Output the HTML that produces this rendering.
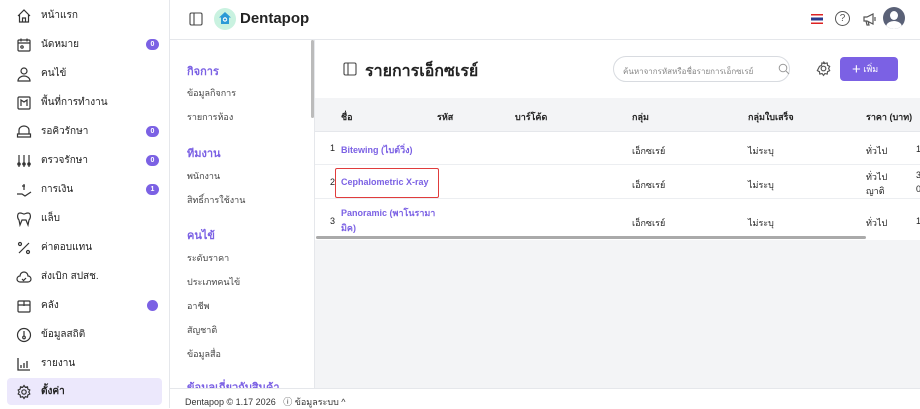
<!DOCTYPE html>
<html><head><meta charset="utf-8"><style>
*{box-sizing:border-box;margin:0;padding:0}
body{width:920px;height:408px;overflow:hidden;font-family:"Liberation Sans","Noto Sans CJK SC",sans-serif;background:#fff;color:#222;position:relative;font-size:10px}
.sb{position:absolute;left:0;top:0;width:170px;height:408px;border-right:1px solid #e5e7eb;background:#fff}
.it{position:absolute;left:7px;width:155px;height:27px;display:flex;align-items:center;font-size:10px;color:#222}
.it svg{position:absolute;left:9px;width:16px;height:16px}
.it span{position:absolute;left:34px}
.bd{position:absolute;left:139px;width:13px;height:11px;border-radius:6px;background:#7b61e4;color:#fff;font-size:7px;text-align:center;line-height:11px;font-weight:bold}
.act{background:#ece8fc;border-radius:4px;font-weight:bold}
.top{position:absolute;left:170px;top:0;right:0;height:40px;border-bottom:1px solid #e5e7eb;background:#fff}
.sub{position:absolute;left:170px;top:40px;width:145px;height:348px;background:#fff;border-right:1px solid #e5e7eb}
.sh{position:absolute;left:17px;color:#7b61e4;font-weight:bold;font-size:11px}
.si{position:absolute;left:17px;color:#444;font-size:9px}
.main{position:absolute;left:315px;top:40px;right:0;height:348px;background:#f3f4f6}
.card{position:absolute;left:0;top:0;right:0;height:200px;background:#fff}
.th{position:absolute;left:0;right:0;top:58px;height:34px;background:#f3f4f6;border-bottom:1px solid #e5e7eb}
.th div{position:absolute;top:12px;font-weight:bold;font-size:9px;color:#222}
.row{position:absolute;left:0;right:0;border-bottom:1px solid #eceef1;font-size:9px}
.row div{position:absolute}
.lk{color:#7b61e4;font-weight:bold}
.foot{position:absolute;left:170px;top:388px;right:0;height:20px;border-top:1px solid #e5e7eb;background:#fff;font-size:9px;color:#333;padding:6px 0 0 15px}
</style></head><body>
<div class="sb">
<div class="it" style="top:2px"><svg viewBox="0 0 16 16" fill="none" stroke="#333" stroke-width="1.2"><path d="M2 8L8 2l6 6M3.5 7v7h9V7M6.5 14v-4h3v4"/></svg><span>หน้าแรก</span></div>
<div class="it" style="top:31px"><svg viewBox="0 0 16 16" fill="none" stroke="#333" stroke-width="1.2"><rect x="2" y="3" width="12" height="11" rx="1"/><path d="M2 6h12M5 1.5v3M11 1.5v3"/><circle cx="6" cy="10" r="1.2"/></svg><span>นัดหมาย</span><div class="bd">0</div></div>
<div class="it" style="top:60px"><svg viewBox="0 0 16 16" fill="none" stroke="#333" stroke-width="1.2"><circle cx="8" cy="5" r="3"/><path d="M2 15c0-3 3-5 6-5s6 2 6 5z"/></svg><span>คนไข้</span></div>
<div class="it" style="top:89px"><svg viewBox="0 0 16 16" fill="none" stroke="#333" stroke-width="1.2"><rect x="2" y="2" width="12" height="12" rx="1"/><path d="M5 11V5l3 2 3-2v6"/></svg><span>พื้นที่การทำงาน</span></div>
<div class="it" style="top:118px"><svg viewBox="0 0 16 16" fill="none" stroke="#333" stroke-width="1.2"><path d="M3 10V6a5 4 0 0110 0v4M1.5 10h13v3h-13z"/></svg><span>รอคิวรักษา</span><div class="bd">0</div></div>
<div class="it" style="top:147px"><svg viewBox="0 0 16 16" fill="none" stroke="#333" stroke-width="1.2"><path d="M3 2v12M8 2v12M13 2v12"/><circle cx="3" cy="11" r="1.2"/><circle cx="8" cy="11" r="1.2"/><circle cx="13" cy="11" r="1.2"/></svg><span>ตรวจรักษา</span><div class="bd">0</div></div>
<div class="it" style="top:176px"><svg viewBox="0 0 16 16" fill="none" stroke="#333" stroke-width="1.2"><path d="M1 12h5l3 2 6-4M8 2v6M6 4h3"/></svg><span>การเงิน</span><div class="bd">1</div></div>
<div class="it" style="top:205px"><svg viewBox="0 0 16 16" fill="none" stroke="#333" stroke-width="1.2"><path d="M4 2c-3 0-3 5-1 7l1 5 2-5h4l2 5 1-5c2-2 2-7-1-7-2 0-3 1-4 1S6 2 4 2z"/></svg><span>แล็บ</span></div>
<div class="it" style="top:234px"><svg viewBox="0 0 16 16" fill="none" stroke="#333" stroke-width="1.2"><path d="M13 3L3 13"/><circle cx="4" cy="4" r="1.5"/><circle cx="12" cy="12" r="1.5"/></svg><span>ค่าตอบแทน</span></div>
<div class="it" style="top:263px"><svg viewBox="0 0 16 16" fill="none" stroke="#333" stroke-width="1.2"><path d="M4 13a3 3 0 010-6 4 4 0 018 0 3 3 0 010 6z M6 10l1.5 1.5L10 9"/></svg><span>ส่งเบิก สปสช.</span></div>
<div class="it" style="top:292px"><svg viewBox="0 0 16 16" fill="none" stroke="#333" stroke-width="1.2"><rect x="2" y="3" width="12" height="11" rx="1"/><path d="M2 7h12M8 3v5"/></svg><span>คลัง</span><div class="bd" style="width:11px;left:140px"></div></div>
<div class="it" style="top:321px"><svg viewBox="0 0 16 16" fill="none" stroke="#333" stroke-width="1.2"><circle cx="8" cy="8" r="6.5"/><path d="M8 4v5"/><circle cx="8" cy="10.5" r="1.3"/></svg><span>ข้อมูลสถิติ</span></div>
<div class="it" style="top:350px"><svg viewBox="0 0 16 16" fill="none" stroke="#333" stroke-width="1.3"><path d="M2 2v12h12M5 12V9M8 12V7M11 12V5"/></svg><span>รายงาน</span></div>
<div class="it act" style="top:378px"><svg viewBox="0 0 16 16" fill="none" stroke="#333" stroke-width="1.2"><circle cx="8" cy="8" r="2.2"/><path d="M8 1.5l1.3 1.8 2.2-.5.3 2.2 2 1-1 2 1 2-2 1-.3 2.2-2.2-.5L8 14.5l-1.3-1.8-2.2.5-.3-2.2-2-1 1-2-1-2 2-1 .3-2.2 2.2.5z"/></svg><span>ตั้งค่า</span></div>
</div>
<div class="top">
<svg style="position:absolute;left:19px;top:12px" width="14" height="14" viewBox="0 0 14 14" fill="none" stroke="#444" stroke-width="1.1"><rect x="1" y="1" width="12" height="12" rx="1.5"/><path d="M5 1v12"/></svg>
<div style="position:absolute;left:44px;top:8px;width:22px;height:22px;border-radius:50%;background:#c9f2e0"></div>
<svg style="position:absolute;left:48px;top:11px" width="14" height="14" viewBox="0 0 14 14"><path d="M7 1L1 6.5h2V13h8V6.5h2z" fill="#2a9ad6"/><circle cx="7" cy="8.5" r="2.2" fill="#fff"/><path d="M7 7.3v2.4M5.8 8.5h2.4" stroke="#2a9ad6" stroke-width="0.9"/></svg>
<div style="position:absolute;left:70px;top:10px;font-size:15px;font-weight:bold;color:#222">Dentapop</div>
<div style="position:absolute;left:641px;top:14px;width:12px;height:10px;background:linear-gradient(#d22 0 17%,#fff 17% 33%,#2a3a8c 33% 67%,#fff 67% 83%,#d22 83%)"></div>
<div style="position:absolute;left:665px;top:11px;width:15px;height:15px;border:1.2px solid #555;border-radius:50%;font-size:10px;text-align:center;line-height:13px;color:#555">?</div>
<svg style="position:absolute;left:692px;top:11px" width="16" height="16" viewBox="0 0 16 16" fill="none" stroke="#555" stroke-width="1.2"><path d="M2 6h3l6-3v10l-6-3H2zM4 10l1 4h2l-1-4M13 6v4"/></svg>
<div style="position:absolute;left:713px;top:7px;width:22px;height:22px;border-radius:50%;background:#5a6177;overflow:hidden"><div style="position:absolute;left:7px;top:4px;width:8px;height:9px;border-radius:50%;background:#fff"></div><div style="position:absolute;left:3px;top:14px;width:16px;height:12px;border-radius:50%;background:#fff"></div></div>
</div>
<div class="sub">
<div style="position:absolute;left:141px;top:0;width:3px;height:78px;background:#bbb;border-radius:2px"></div>
<div class="sh" style="top:22px">กิจการ</div>
<div class="si" style="top:46px">ข้อมูลกิจการ</div>
<div class="si" style="top:70px">รายการห้อง</div>
<div class="sh" style="top:104px">ทีมงาน</div>
<div class="si" style="top:129px">พนักงาน</div>
<div class="si" style="top:153px">สิทธิ์การใช้งาน</div>
<div class="sh" style="top:186px">คนไข้</div>
<div class="si" style="top:211px">ระดับราคา</div>
<div class="si" style="top:235px">ประเภทคนไข้</div>
<div class="si" style="top:259px">อาชีพ</div>
<div class="si" style="top:283px">สัญชาติ</div>
<div class="si" style="top:307px">ข้อมูลสื่อ</div>
<div class="sh" style="top:338px">ข้อมูลเกี่ยวกับสินค้า</div>
</div>
<div class="main">
<div class="card">
<svg style="position:absolute;left:28px;top:22px" width="14" height="14" viewBox="0 0 14 14" fill="none" stroke="#444" stroke-width="1.1"><rect x="1" y="1" width="12" height="12" rx="1.5"/><path d="M5 1v12"/></svg>
<div style="position:absolute;left:50px;top:19px;font-size:16px;font-weight:bold;color:#222">รายการเอ็กซเรย์</div>
<div style="position:absolute;left:298px;top:16px;width:177px;height:26px;border:1px solid #d8dbe0;border-radius:13px;font-size:8px;color:#888;padding:8px 0 0 9px">ค้นหาจากรหัสหรือชื่อรายการเอ็กซเรย์</div>
<svg style="position:absolute;left:463px;top:23px" width="12" height="12" viewBox="0 0 12 12" fill="none" stroke="#999" stroke-width="1"><circle cx="5" cy="5" r="3.8"/><path d="M8 8l3 3"/></svg>
<svg style="position:absolute;left:500px;top:20px" width="17" height="17" viewBox="0 0 16 16" fill="none" stroke="#555" stroke-width="1.1"><circle cx="8" cy="8" r="2.2"/><path d="M8 1.5l1.3 1.8 2.2-.5.3 2.2 2 1-1 2 1 2-2 1-.3 2.2-2.2-.5L8 14.5l-1.3-1.8-2.2.5-.3-2.2-2-1 1-2 1-2 2-1 .3-2.2 2.2.5z"/></svg>
<div style="position:absolute;left:525px;top:17px;width:58px;height:24px;background:#7b61e4;border-radius:4px;color:#fff;font-size:9px;padding:5px 0 0 12px"><span style="font-size:15px;line-height:12px;vertical-align:-2px">+</span> เพิ่ม</div>
<div class="th"><div style="left:26px">ชื่อ</div><div style="left:122px">รหัส</div><div style="left:200px">บาร์โค้ด</div><div style="left:317px">กลุ่ม</div><div style="left:433px">กลุ่มใบเสร็จ</div><div style="left:551px">ราคา (บาท)</div></div>
<div class="row" style="top:92px;height:33px"><div style="left:15px;top:11px">1</div><div class="lk" style="left:26px;top:11px">Bitewing (ไบต์วิ่ง)</div><div style="left:317px;top:12px">เอ็กซเรย์</div><div style="left:433px;top:12px">ไม่ระบุ</div><div style="left:551px;top:12px">ทั่วไป</div><div style="left:601px;top:12px">1,</div></div>
<div class="row" style="top:125px;height:34px"><div style="left:15px;top:12px">2</div><div class="lk" style="left:26px;top:12px">Cephalometric X-ray</div><div style="left:20px;top:3px;width:104px;height:30px;border:1.5px solid #e03c3c;border-radius:2px"></div><div style="left:317px;top:13px">เอ็กซเรย์</div><div style="left:433px;top:13px">ไม่ระบุ</div><div style="left:551px;top:5px">ทั่วไป</div><div style="left:551px;top:19px">ญาติ</div><div style="left:601px;top:5px">3</div><div style="left:601px;top:19px">0</div></div>
<div class="row" style="top:159px;height:38px;border:none"><div style="left:15px;top:17px">3</div><div class="lk" style="left:26px;top:7px;line-height:15px">Panoramic (พาโนรามา<br>มิค)</div><div style="left:317px;top:17px">เอ็กซเรย์</div><div style="left:433px;top:17px">ไม่ระบุ</div><div style="left:551px;top:17px">ทั่วไป</div><div style="left:601px;top:17px">1,</div></div>
<div style="position:absolute;left:1px;top:196px;width:550px;height:3px;background:#aaa;border-radius:2px"></div>
</div>
</div>
<div class="foot">Dentapop © 1.17 2026 &nbsp; ⓘ ข้อมูลระบบ ^</div>
</body></html>
